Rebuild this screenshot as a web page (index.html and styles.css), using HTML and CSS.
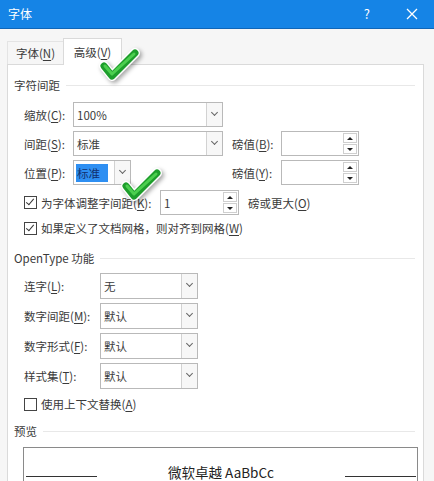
FILE: index.html
```html
<!DOCTYPE html>
<html lang="zh-CN">
<head>
    <meta charset="UTF-8">
    <title>字体</title>
    <link rel="stylesheet" href="styles.css">
</head>
<body>
    <div class="dialog">
        <div class="titlebar">
            <span class="title">字体</span>
            <span class="help">?</span>
            <svg class="close" width="12" height="12" viewBox="0 0 12 12">
                <path d="M1 1 L11 11 M11 1 L1 11" stroke="#fff" stroke-width="1.3" fill="none"/>
            </svg>
        </div>

        <div class="tabs">
            <div class="tab">字体(<u>N</u>)</div>
            <div class="tab active">高级(<u>V</u>)</div>
        </div>

        <div class="panel">
            <div class="group-title"><span>字符间距</span><i></i></div>

            <div class="row first">
                <span class="row-label">缩放(<u>C</u>):</span>
                <div class="select wide"><span class="value">100%</span><span class="arrow"></span></div>
            </div>
            <div class="row">
                <span class="row-label">间距(<u>S</u>):</span>
                <div class="select wide"><span class="value">标准</span><span class="arrow"></span></div>
                <div class="side">
                    <span class="row-label">磅值(<u>B</u>):</span>
                    <div class="spin"><span class="value"></span><span class="spin-btns"><b class="up"></b><b class="down"></b></span></div>
                </div>
            </div>
            <div class="row">
                <span class="row-label">位置(<u>P</u>):</span>
                <div class="select narrow"><span class="value"><em class="selected">标准</em></span><span class="arrow"></span></div>
                <div class="side">
                    <span class="row-label">磅值(<u>Y</u>):</span>
                    <div class="spin"><span class="value"></span><span class="spin-btns"><b class="up"></b><b class="down"></b></span></div>
                </div>
            </div>
            <div class="row kern-row">
                <span class="check-line kern"><span class="box checked"></span>为字体调整字间距(<u>K</u>):</span>
                <div class="spin"><span class="value">1</span><span class="spin-btns"><b class="up"></b><b class="down"></b></span></div>
                <span class="after">磅或更大(<u>O</u>)</span>
            </div>
            <div class="check-line grid-check"><span class="box checked"></span>如果定义了文档网格，则对齐到网格(<u>W</u>)</div>

            <div class="group-title opentype"><span>OpenType 功能</span><i></i></div>

            <div class="row ot first-ot">
                <span class="row-label">连字(<u>L</u>):</span>
                <div class="select mid"><span class="value">无</span><span class="arrow"></span></div>
            </div>
            <div class="row ot">
                <span class="row-label">数字间距(<u>M</u>):</span>
                <div class="select mid"><span class="value">默认</span><span class="arrow"></span></div>
            </div>
            <div class="row ot">
                <span class="row-label">数字形式(<u>F</u>):</span>
                <div class="select mid"><span class="value">默认</span><span class="arrow"></span></div>
            </div>
            <div class="row ot">
                <span class="row-label">样式集(<u>T</u>):</span>
                <div class="select mid"><span class="value">默认</span><span class="arrow"></span></div>
            </div>
            <div class="check-line context"><span class="box"></span>使用上下文替换(<u>A</u>)</div>

            <div class="group-title preview-title"><span>预览</span><i></i></div>
            <div class="preview">
                <div class="preview-line">
                    <i></i>
                    <span class="sample">微软卓越 AaBbCc</span>
                    <i></i>
                </div>
            </div>
        </div>

        <svg class="tick tick-tab" width="44" height="36" viewBox="0 0 44 36">
            <path d="M5 18 L13 28 L36 5" stroke="#fff" stroke-width="10" fill="none" stroke-linecap="round" stroke-linejoin="round"/>
            <path d="M5 18 L13 28 L36 5" stroke="#1e9e2c" stroke-width="7" fill="none" stroke-linecap="round" stroke-linejoin="round"/>
            <path d="M6 18 L13 26 L35 6" stroke="#4ccf4f" stroke-width="3" fill="none" stroke-linecap="round" stroke-linejoin="round"/>
        </svg>
        <svg class="tick tick-pos" width="44" height="36" viewBox="0 0 44 36">
            <path d="M5 18 L13 28 L36 5" stroke="#fff" stroke-width="10" fill="none" stroke-linecap="round" stroke-linejoin="round"/>
            <path d="M5 18 L13 28 L36 5" stroke="#1e9e2c" stroke-width="7" fill="none" stroke-linecap="round" stroke-linejoin="round"/>
            <path d="M6 18 L13 26 L35 6" stroke="#4ccf4f" stroke-width="3" fill="none" stroke-linecap="round" stroke-linejoin="round"/>
        </svg>
    </div>
</body>
</html>
```

FILE: styles.css
```css
body {
    margin: 0;
    font-family: "Noto Sans CJK SC", "Noto Sans", sans-serif;
    font-size: 11.5px;
    line-height: 16px;
    color: #3a3a3a;
}
u {
    text-decoration-thickness: 1px;
    text-underline-offset: 2px;
}
.dialog {
    position: relative;
    width: 434px;
    height: 481px;
    overflow: hidden;
    background: #f6f6f6;
}
.titlebar {
    display: flex;
    align-items: center;
    height: 28px;
    background: #1584e6;
    border-bottom: 1px solid #0f66b8;
    color: #fff;
    font-size: 12px;
}
.title {
    margin-left: 8px;
    flex: 1;
}
.help {
    margin-right: 36px;
    font-size: 13px;
}
.close {
    margin-right: 16px;
}
.tabs {
    display: flex;
    align-items: flex-end;
    margin: 9px 0 0 7px;
    height: 26px;
}
.tab {
    height: 22px;
    width: 55px;
    display: flex;
    align-items: center;
    justify-content: center;
    border: 1px solid #e4e4e4;
    border-bottom: none;
}
.tab.active {
    height: 26px;
    width: 57px;
    background: #fff;
    border-color: #dadada;
    position: relative;
    top: 1px;
    margin-left: -1px;
}
.panel {
    margin: 0 10px 0 7px;
    height: 420px;
    background: #fff;
    border: 1px solid #dadada;
    padding: 0 8px 0 6px;
}
.group-title {
    display: flex;
    align-items: center;
    margin-top: 12px;
    height: 16px;
}
.group-title i {
    flex: 1;
    height: 1px;
    background: #e8e8e8;
    margin-left: 6px;
}
.row {
    display: flex;
    align-items: center;
    height: 25px;
    width: 335px;
    margin: 4px 0 0 10px;
}
.row.first {
    margin-top: 9px;
}
.row-label {
    width: 49px;
    flex: none;
}
.side {
    margin-left: auto;
    display: flex;
    align-items: center;
}
.select, .spin {
    display: flex;
    height: 23px;
    border: 1px solid #b9b9b9;
    background: #fff;
    box-sizing: content-box;
}
.select .value, .spin .value {
    flex: 1;
    display: flex;
    align-items: center;
    padding-left: 3px;
}
.select .arrow {
    width: 15px;
    border-left: 1px solid #d2d2d2;
    background: #f7f7f7;
    position: relative;
}
.select .arrow::after {
    content: "";
    position: absolute;
    left: 5px;
    top: 7px;
    width: 4px;
    height: 4px;
    border-right: 1px solid #666;
    border-bottom: 1px solid #666;
    transform: rotate(45deg);
}
.select.wide {
    width: 148px;
}
.select.narrow {
    width: 56px;
}
.select.mid {
    width: 96px;
}
.selected {
    font-style: normal;
    background: #2e8ff2;
    color: #12306e;
    padding: 1px 8px 1px 1px;
    margin-left: -1px;
}
.spin {
    width: 76px;
}
.spin-btns {
    width: 14px;
    display: flex;
    flex-direction: column;
    gap: 1px;
    padding: 1px 1px 1px 0;
}
.spin-btns b {
    flex: 1;
    border: 1px solid #cfcfcf;
    position: relative;
}
.spin-btns b::after {
    content: "";
    position: absolute;
    left: 3px;
    width: 0;
    height: 0;
    border-left: 3px solid transparent;
    border-right: 3px solid transparent;
}
.spin-btns .up::after {
    top: 3px;
    border-bottom: 3px solid #222;
}
.spin-btns .down::after {
    top: 3px;
    border-top: 3px solid #222;
}
.check-line {
    display: flex;
    align-items: center;
}
.box {
    width: 11px;
    height: 11px;
    border: 1px solid #444;
    margin-right: 4px;
    position: relative;
    flex: none;
}
.box.checked::after {
    content: "";
    position: absolute;
    left: 3px;
    top: 0px;
    width: 3px;
    height: 7px;
    border-right: 1px solid #333;
    border-bottom: 1px solid #333;
    transform: rotate(40deg);
}
.kern-row {
    margin-top: 5px;
    width: 380px;
}
.kern {
    width: 136px;
    flex: none;
}
.kern-row .spin {
    width: 77px;
}
.after {
    margin-left: 9px;
}
.grid-check {
    margin: 5px 0 0 10px;
}
.opentype {
    margin-top: 14px;
}
.row.ot {
    height: 26px;
    margin-top: 4px;
    width: auto;
}
.row.ot .row-label {
    width: 76px;
}
.row.first-ot {
    margin-top: 7px;
}
.row.ot .select {
    height: 24px;
}
.context {
    margin: 7px 0 0 10px;
}
.preview-title {
    margin-top: 11px;
}
.preview {
    margin: 8px 0 0 9px;
    width: 393px;
    height: 40px;
    border: 1px solid #8a8a8a;
}
.preview-line {
    display: flex;
    justify-content: space-between;
    align-items: center;
    margin-top: 16px;
    padding: 0 1px 0 2px;
}
.preview-line i {
    width: 71px;
    height: 1px;
    background: #333;
    margin-top: 8px;
}
.sample {
    font-size: 13.5px;
    color: #222;
}
.tick {
    position: absolute;
    filter: drop-shadow(2px 2px 2px rgba(0, 0, 0, 0.35));
}
.tick-tab {
    left: 99px;
    top: 48px;
}
.tick-pos {
    left: 121px;
    top: 168px;
}
```
